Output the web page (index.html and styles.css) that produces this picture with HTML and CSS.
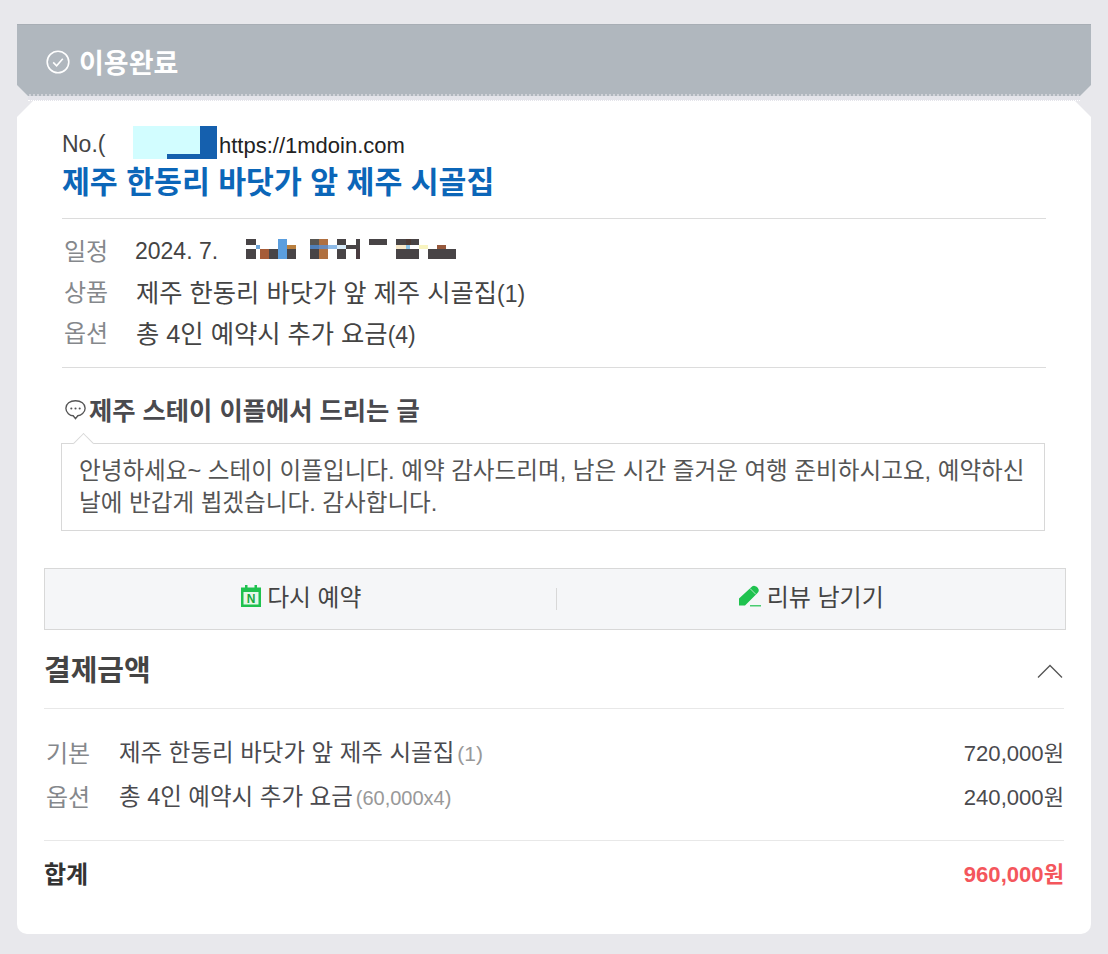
FILE: index.html
```html
<!DOCTYPE html>
<html lang="ko">
<head>
<meta charset="utf-8">
<title>이용완료</title>
<link rel="stylesheet" href="styles.css">
</head>
<body>
<main class="page">
  <header class="status">
    <svg class="status-icon" viewBox="0 0 24 24" width="24" height="24"><circle cx="12" cy="12" r="10.800" fill="none" stroke="#fff" stroke-width="1.600"/><path d="M7.200 12.400l3.400 3.400 6.200-7" fill="none" stroke="#fff" stroke-width="1.600"/></svg>
    <span>이용완료</span>
  </header>
  <div class="ticket-gap"></div>
  <section class="card">
    <div class="booking">
      <div class="no-row">
        <span class="no">No.(</span>
        <div class="redact">
          <div class="redact-cyan"></div>
          <div class="redact-blue"></div>
          <div class="redact-bar"></div>
        </div>
        <span class="url">https://1mdoin.com</span>
      </div>
      <h1 class="title">제주 한동리 바닷가 앞 제주 시골집</h1>
      <div class="details">
        <div class="detail"><span class="label">일정</span><span class="value value-date">2024. 7.</span>
          <svg class="mosaic" viewBox="0 0 210 20" width="210" height="20" shape-rendering="crispEdges">
            <g fill="#484446">
              <rect x="0" y="0" width="10" height="6"/><rect x="0" y="10" width="10" height="10"/>
              <rect x="23" y="10" width="9" height="10"/><rect x="41" y="10" width="9" height="10"/>
              <rect x="64" y="10" width="9" height="10"/>
              <rect x="91" y="0" width="9" height="6"/><rect x="91" y="10" width="9" height="10"/>
              <rect x="100" y="6" width="10" height="4"/>
              <rect x="110" y="0" width="4" height="20"/>
              <rect x="123" y="0" width="18" height="6"/>
              <rect x="150" y="0" width="23" height="6"/><rect x="150" y="10" width="23" height="10"/>
              <rect x="182" y="10" width="28" height="10"/>
            </g>
            <rect x="10" y="6" width="4" height="4" fill="#6ea5d8"/>
            <rect x="14" y="10" width="9" height="10" fill="#a65c38"/>
            <rect x="32" y="0" width="9" height="20" fill="#5b9ede"/>
            <rect x="41" y="6" width="9" height="4" fill="#b97f3e"/>
            <rect x="64" y="0" width="9" height="6" fill="#585652"/>
            <rect x="73" y="0" width="9" height="6" fill="#b07040"/>
            <rect x="64" y="6" width="9" height="4" fill="#4f7fb8"/>
            <rect x="73" y="6" width="9" height="4" fill="#6a8ab8"/>
            <rect x="73" y="10" width="9" height="10" fill="#b07040"/>
            <rect x="82" y="6" width="9" height="4" fill="#8ebbe8"/>
            <rect x="91" y="6" width="9" height="4" fill="#d8ecfa"/>
            <rect x="110" y="10" width="4" height="10" fill="#4a3c40"/>
            <rect x="150" y="6" width="10" height="4" fill="#f8e8c8"/>
            <rect x="160" y="6" width="4" height="4" fill="#8cc4e8"/>
            <rect x="160" y="0" width="5" height="6" fill="#4c3a34"/>
            <rect x="173" y="6" width="9" height="4" fill="#f8f4c0"/>
            <rect x="191" y="6" width="9" height="4" fill="#96583c"/>
          </svg>
        </div>
        <div class="detail"><span class="label">상품</span><span class="value value-text">제주 한동리 바닷가 앞 제주 시골집<span class="latin">(1)</span></span></div>
        <div class="detail"><span class="label">옵션</span><span class="value value-text">총 4인 예약시 추가 요금<span class="latin">(4)</span></span></div>
      </div>
      <div class="notice">
        <h2 class="notice-title">
          <svg viewBox="0 0 22 22" width="23" height="23"><path d="M11 2.600c-5.200 0-9.200 3-9.200 7.200 0 4.200 4 7.200 7 7.200l2.200 2.800 2.200-2.800c3-.2 7-3 7-7.200 0-4.200-4-7.200-9.200-7.200z" fill="none" stroke="#555" stroke-width="1.300"/><circle cx="7" cy="10" r="1" fill="#555"/><circle cx="11" cy="10" r="1" fill="#555"/><circle cx="15" cy="10" r="1" fill="#555"/></svg>
          <span>제주 스테이 이플에서 드리는 글</span>
        </h2>
        <div class="bubble">안녕하세요~ 스테이 이플입니다. 예약 감사드리며, 남은 시간 즐거운 여행 준비하시고요, 예약하신 날에 반갑게 뵙겠습니다. 감사합니다.</div>
      </div>
    </div>
    <div class="actions">
      <a class="action action-cal">
        <svg viewBox="0 0 20 22" width="20" height="22"><path d="M4 0h2.500v2.500h7V0H16v2.500h4V22H0V2.500h4z" fill="#1fc24f"/><rect x="2.500" y="7" width="15" height="12.500" fill="#e6f7ea"/><text x="10" y="17.500" text-anchor="middle" class="cal-n">N</text></svg>
        <span>다시 예약</span>
      </a>
      <div class="action-sep"></div>
      <a class="action action-pen">
        <svg viewBox="0 0 24 22" width="24" height="22"><path d="M1 13.500L13.500 2a4 4 0 0 1 6 .5 4 4 0 0 1 0 5.500L7 20.500H1z" fill="#1fc24f"/><path d="M12 3.500l5.800 5.800" stroke="#f5f6f8" stroke-width=".7"/><path d="M12 20.800h11" stroke="#1fc24f" stroke-width="1.200"/></svg>
        <span>리뷰 남기기</span>
      </a>
    </div>
    <div class="payment">
      <div class="pay-head">
        <h2>결제금액</h2>
        <svg class="chevron" viewBox="0 0 26 14" width="26" height="14"><path d="M1 13.500L13 1.500l12 12" fill="none" stroke="#555" stroke-width="1.300"/></svg>
      </div>
      <div class="pay-rows">
        <div class="pay-row"><span class="pay-label">기본</span><span class="pay-name">제주 한동리 바닷가 앞 제주 시골집<small class="small-count">(1)</small></span><span class="pay-amount">720,000원</span></div>
        <div class="pay-row"><span class="pay-label">옵션</span><span class="pay-name">총 4인 예약시 추가 요금<small class="small-unit">(60,000x4)</small></span><span class="pay-amount">240,000원</span></div>
      </div>
      <div class="pay-total"><span class="total-label">합계</span><span class="total-amount">960,000원</span></div>
    </div>
  </section>
</main>
</body>
</html>
```
FILE: styles.css
```css
* { box-sizing: border-box; }
html, body { margin: 0; padding: 0; }
body {
  background: #e8e8ec;
  font-family: "Liberation Sans", "Noto Sans CJK KR", sans-serif;
  color: #4a4a4e;
}
.page { padding: 24px 17px 20px; }
.status {
  height: 72px;
  background: #b0b7be;
  border-top: 1px solid #a8aeb5;
  border-bottom: 2px dotted #d0d2d8;
  clip-path: polygon(0 0, 100% 0, 100% 61px, calc(100% - 11px) 100%, 11px 100%, 0 61px);
  display: flex;
  align-items: center;
  gap: 9px;
  padding: 4px 0 0 29px;
  color: #fff;
  font-size: 27px;
  font-weight: 700;
}
.ticket-gap { height: 5px; background: #e4e4ea; margin: 0 11px; border-bottom: 1px dotted #fff; }
.card {
  background: #fff;
  height: 833px;
  border-radius: 0 0 10px 10px;
  clip-path: polygon(16px 0, calc(100% - 16px) 0, 100% 16px, 100% 100%, 0 100%, 0 16px);
  padding-top: 27px;
}
.booking { padding: 0 45px; }
.no-row { position: relative; height: 33px; display: flex; align-items: center; font-size: 23px; }
.no { width: 157px; flex: none; color: #444; white-space: nowrap; }
.url { color: #222; font-size: 22px; margin-top: 3px; }
.redact { position: absolute; left: 71px; top: -2px; width: 84px; height: 33px; }
.redact-cyan { position: absolute; inset: 0 17px 0 0; background: #d2fdff; }
.redact-blue { position: absolute; right: 0; top: 0; width: 17px; height: 33px; background: #1560ae; }
.redact-bar { position: absolute; left: 34px; right: 0; bottom: 0; height: 5px; background: #1560ae; }
.title { margin: 0; height: 43px; font-size: 30.300px; line-height: 43px; font-weight: 700; color: #0b66b8; white-space: nowrap; }
.details { margin-top: 14px; padding: 10px 0 14px; border-top: 1px solid #dcdcdc; border-bottom: 1px solid #dcdcdc; height: 150px; }
.detail { height: 41px; display: flex; align-items: center; font-size: 25.300px; color: #444; }
.label { width: 73px; flex: none; padding-left: 2px; font-size: 24px; color: #85888c; }
.latin { font-size: 23px; }
.value-text { margin-left: 1px; }
.value-date { font-size: 23px; padding-top: 3px; }
.mosaic { margin-left: 28px; margin-bottom: 2px; }
.notice { padding-top: 24px; }
.notice-title { margin: 0; display: flex; align-items: center; gap: 2px; height: 34px; font-size: 25.300px; font-weight: 700; color: #4a4a4e; padding-left: 2px; }
.bubble { position: relative; margin: 17px 0 0 -1px; height: 88px; width: 984px; border: 1px solid #d8d8d8; padding: 11px 12px 11px 17px; font-size: 23.600px; line-height: 32px; color: #555; }
.bubble::before {
  content: "";
  position: absolute;
  left: 14px;
  top: -8px;
  width: 14px;
  height: 14px;
  background: #fff;
  border-left: 1px solid #d8d8d8;
  border-top: 1px solid #d8d8d8;
  transform: rotate(45deg);
}
.actions { margin: 37px 25px 0 27px; height: 62px; display: flex; align-items: center; background: #f5f6f8; border: 1px solid #d8d8d8; }
.action { flex: 1; display: flex; align-items: center; justify-content: center; gap: 6px; font-size: 24px; color: #444; padding-bottom: 6px; }
.action span { margin-top: -2px; }
.action-cal { padding-left: 2px; }
.action-cal span { font-size: 23.800px; }
.action-pen { gap: 5px; }
.action-sep { width: 1px; height: 22px; background: #d8d8d8; }
.payment { margin: 0 27px; }
.pay-head { height: 79px; display: flex; align-items: center; justify-content: space-between; padding-right: 1px; border-bottom: 1px solid #e8e8e8; }
.pay-head h2 { margin: 0 0 2px; font-size: 29px; font-weight: 700; color: #444; }
.chevron { margin-top: 4px; }
.pay-rows { padding: 20px 0; height: 132px; border-bottom: 1px solid #e8e8e8; }
.pay-row { height: 44px; display: flex; align-items: center; font-size: 23.500px; color: #4a4a4e; }
.pay-label { width: 75px; flex: none; padding-left: 2px; font-size: 24px; color: #85888c; }
.pay-name { flex: 1; }
.pay-name small { color: #999; margin-left: 3px; }
.pay-name .small-count { font-size: 21px; }
.pay-name .small-unit { font-size: 20px; }
.pay-amount { font-size: 22.100px; }
.pay-total { height: 68px; display: flex; align-items: center; justify-content: space-between; font-size: 22.100px; font-weight: 700; color: #333; padding-bottom: 6px; }
.total-label { font-size: 24px; }
.total-amount { color: #f4565c; }
.cal-n { font: 700 12px "Liberation Sans", sans-serif; fill: #16a83f; }
```
